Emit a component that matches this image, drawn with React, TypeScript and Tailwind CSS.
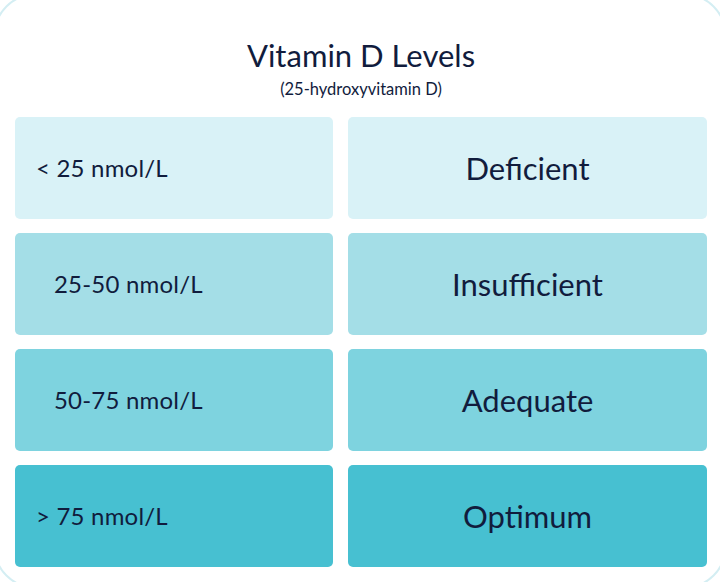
import React from "react";

interface LevelRow {
  range: string;
  label: string;
  bg: string;
  pad: string;
}

const rows: LevelRow[] = [
  { range: "< 25 nmol/L", label: "Deficient", bg: "bg-[#d9f2f7]", pad: "pl-[21px]" },
  { range: "25-50 nmol/L", label: "Insufficient", bg: "bg-[#a4dee7]", pad: "pl-[39px]" },
  { range: "50-75 nmol/L", label: "Adequate", bg: "bg-[#7ed3df]", pad: "pl-[39px]" },
  { range: "> 75 nmol/L", label: "Optimum", bg: "bg-[#47c0d1]", pad: "pl-[21px]" },
];

export default function App() {
  return (
    <div
      className="w-[720px] h-[582px] overflow-hidden bg-white text-[#111c3d]"
      style={{ fontFamily: "Lato, 'Open Sans', sans-serif" }}
    >
      {/* outer card frame, larger than the viewport */}
      <div className="-m-[6px] h-[594px] rounded-[40px] border-2 border-[#d4eef3] pl-[19px] pr-[17px]">
        {/* Heading */}
        <div className="flex flex-col items-center pt-[40px]">
          <h1 className="text-[31px] leading-[38px]">Vitamin D Levels</h1>
          <p className="text-[16.5px] leading-[20px] mt-[5px]">(25-hydroxyvitamin D)</p>
        </div>

        {/* Level table */}
        <div className="grid grid-cols-[318px_359px] gap-x-[15px] gap-y-[14px] mt-[18px]">
          {rows.map((row) => (
            <React.Fragment key={row.label}>
              <div className={`${row.bg} ${row.pad} h-[102px] rounded-[5px] flex items-center`}>
                <span className="text-[24px] tracking-[0.2px]">{row.range}</span>
              </div>
              <div className={`${row.bg} h-[102px] rounded-[5px] flex items-center justify-center`}>
                <span className="text-[31px]">{row.label}</span>
              </div>
            </React.Fragment>
          ))}
        </div>
      </div>
    </div>
  );
}
